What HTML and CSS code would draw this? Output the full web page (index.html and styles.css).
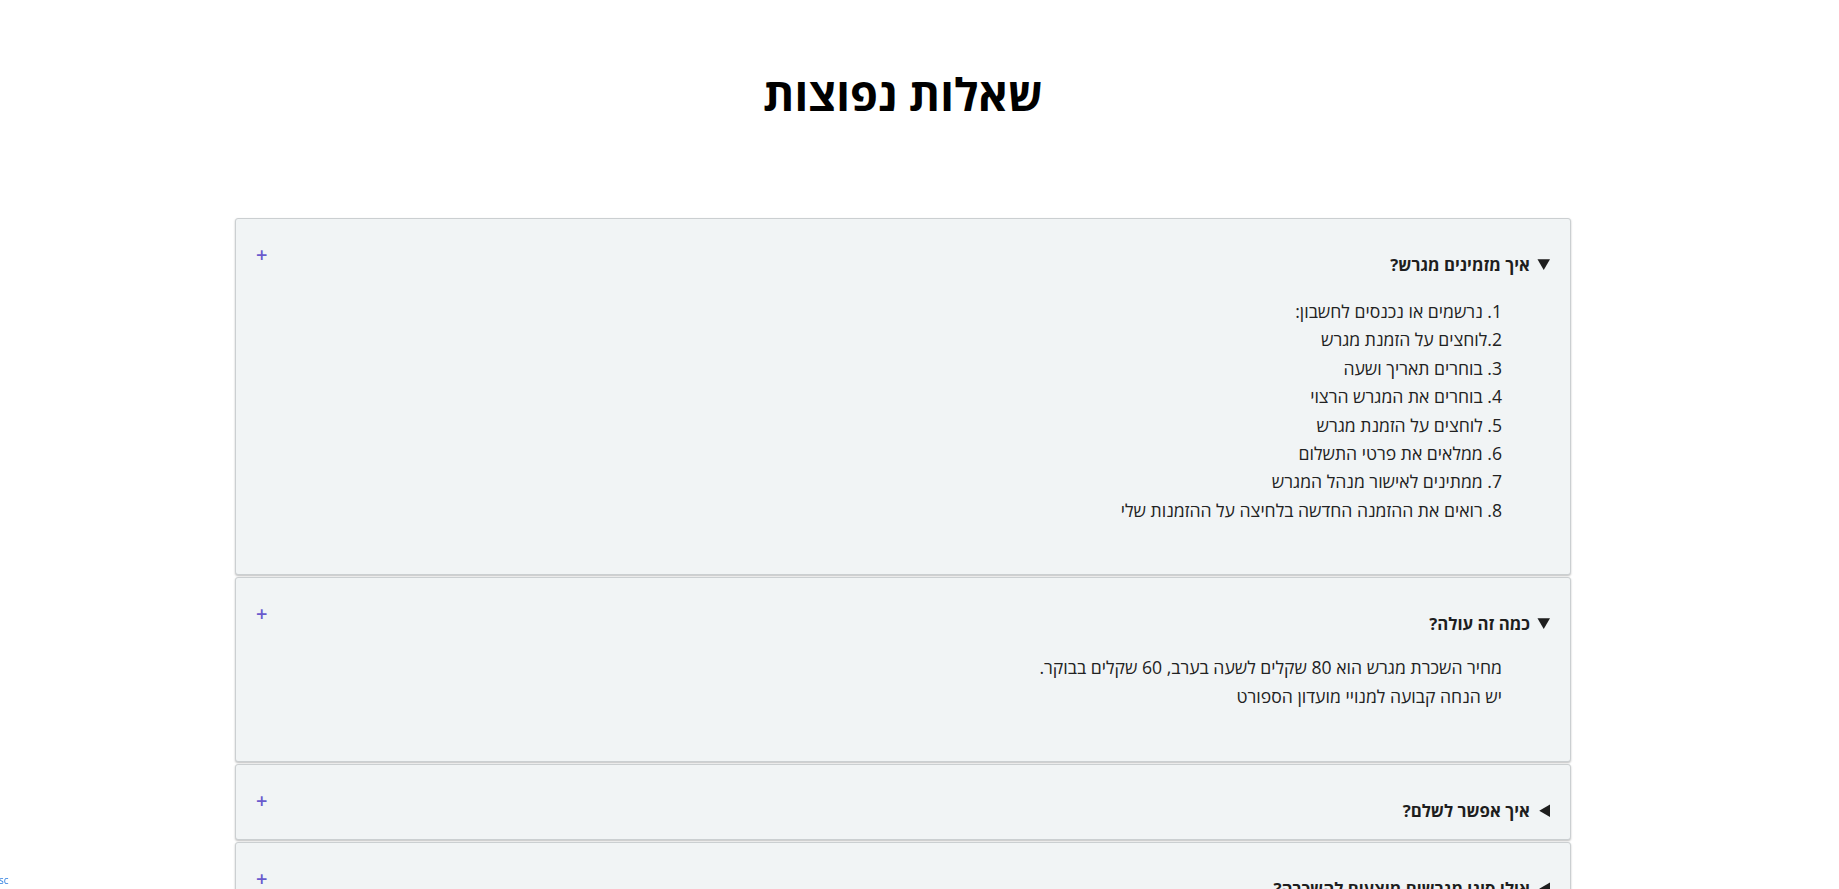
FILE: index.html
```html
<!DOCTYPE html>
<html lang="he" dir="rtl">
<head>
<meta charset="utf-8">
<title>שאלות נפוצות</title>
<link rel="stylesheet" href="styles.css">
</head>
<body>
<main class="faq">
  <h1 class="faq-title">שאלות נפוצות</h1>
  <div class="faq-list">
    <details class="faq-item" open>
      <summary class="faq-q"><span class="faq-plus">+</span>איך מזמינים מגרש?</summary>
      <div class="faq-a faq-a-list">
        <div>1. נרשמים או נכנסים לחשבון:</div>
        <div>2.לוחצים על הזמנת מגרש</div>
        <div>3. בוחרים תאריך ושעה</div>
        <div>4. בוחרים את המגרש הרצוי</div>
        <div>5. לוחצים על הזמנת מגרש</div>
        <div>6. ממלאים את פרטי התשלום</div>
        <div>7. ממתינים לאישור מנהל המגרש</div>
        <div>8. רואים את ההזמנה החדשה בלחיצה על ההזמנות שלי</div>
      </div>
    </details>
    <details class="faq-item" open>
      <summary class="faq-q"><span class="faq-plus">+</span>כמה זה עולה?</summary>
      <div class="faq-a faq-a-text">
        <div>מחיר השכרת מגרש הוא 80 שקלים לשעה בערב, 60 שקלים בבוקר.</div>
        <div>יש הנחה קבועה למנויי מועדון הספורט</div>
      </div>
    </details>
    <details class="faq-item">
      <summary class="faq-q"><span class="faq-plus">+</span>איך אפשר לשלם?</summary>
      <div class="faq-a faq-a-text"><div>ניתן לשלם בכרטיס אשראי.</div></div>
    </details>
    <details class="faq-item">
      <summary class="faq-q"><span class="faq-plus">+</span>אילו סוגי מגרשים מוצעים להשכרה?</summary>
      <div class="faq-a faq-a-text"><div>כדורגל, כדורסל וטניס.</div></div>
    </details>
  </div>
</main>
<a class="corner-link" href="#">sc</a>
</body>
</html>
```
FILE: styles.css
```css
html, body {
  margin: 0;
  padding: 0;
  background: #ffffff;
}
body {
  font-family: "Open Sans", "DejaVu Sans", sans-serif;
  color: #222222;
  padding-right: 33px;
  direction: rtl;
}
.faq {
  width: 1336px;
  margin: 0 auto;
  padding-top: 64px;
}
.faq-title {
  margin: 0 0 94px;
  text-align: center;
  font-size: 45px;
  line-height: 60px;
  font-weight: 700;
  color: #000000;
}
.faq-list {
  display: flex;
  flex-direction: column;
  gap: 2px;
}
.faq-item {
  background: #f1f4f5;
  border: 1px solid #cbcfd1;
  border-radius: 3px;
  box-shadow: 0 1px 2px rgba(0, 0, 0, 0.25);
  padding: 0 20px;
}
.faq-q {
  cursor: pointer;
  font-size: 16.8px;
  font-weight: 700;
  line-height: 26px;
  padding: 32px 0 14px;
  color: #1e1e1e;
}
.faq-item:not([open]) .faq-q {
  padding-bottom: 15px;
}
.faq-q::marker {
  font-size: 19px;
}
.faq-plus {
  float: left;
  font-size: 20px;
  font-weight: 600;
  line-height: 8px;
  color: #6a5acd;
  margin-left: 0;
}
.faq-a {
  font-size: 17.6px;
  line-height: 28.4px;
  padding: 0 48px 50px 0;
  color: #222222;
}
.faq-a-list {
  padding-top: 5px;
}
.faq-a-text {
  padding-top: 2px;
  padding-bottom: 51px;
}
.corner-link {
  position: fixed;
  left: -1px;
  bottom: 2px;
  font-size: 10px;
  color: #2f7fe0;
  text-decoration: none;
  font-family: "Open Sans", sans-serif;
}
```
